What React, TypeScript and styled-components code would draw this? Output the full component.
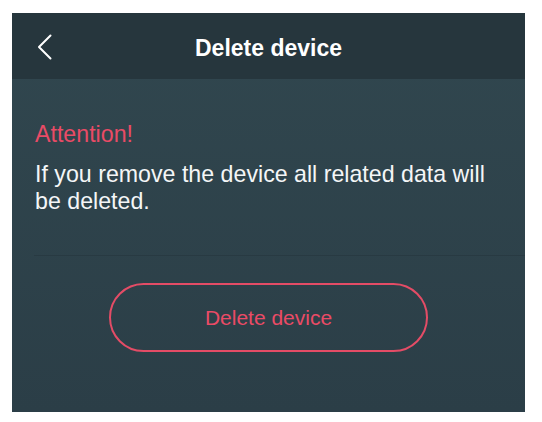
import React from "react";
import styled, { createGlobalStyle } from "styled-components";

const Global = createGlobalStyle`
  html, body { margin: 0; padding: 0; background: #ffffff; }
  body { font-family: "Liberation Sans", Arial, sans-serif; -webkit-font-smoothing: antialiased; }
`;

const Page = styled.div`
  padding: 13px 17px 10px 12px;
`;

const Panel = styled.div`
  width: 513px;
  height: 399px;
  display: flex;
  flex-direction: column;
  background: linear-gradient(180deg, #31474f 0%, #2b3e47 100%);
`;

const Header = styled.header`
  height: 66px;
  flex: none;
  display: grid;
  grid-template-columns: 60px 1fr 60px;
  align-items: center;
  background: #26363d;
  color: #ffffff;
`;

const BackButton = styled.button`
  border: 0;
  background: none;
  padding: 2px 0 0 25px;
  height: 66px;
  display: flex;
  align-items: center;
  cursor: pointer;
`;

const Title = styled.h1`
  margin: 0;
  padding-top: 4px;
  text-align: center;
  font-size: 23px;
  line-height: 27px;
  font-weight: 700;
`;

const Content = styled.section`
  padding: 42px 20px 0 23px;
`;

const Warning = styled.p`
  margin: 0;
  color: #ea4b66;
  font-size: 23.2px;
  line-height: 27px;
`;

const Message = styled.p`
  margin: 13px 0 0;
  color: #f4f6f7;
  font-size: 23.2px;
  line-height: 27px;
`;

const Divider = styled.hr`
  margin: 40px 0 0 22px;
  border: 0;
  height: 1px;
  background: #283a42;
`;

const Actions = styled.div`
  display: flex;
  justify-content: center;
  padding-top: 27px;
`;

const OutlineButton = styled.button`
  width: 319px;
  height: 69px;
  border: 2px solid #e44c66;
  border-radius: 35px;
  background: transparent;
  color: #ea4b66;
  font-family: "Liberation Sans", Arial, sans-serif;
  font-size: 21px;
  padding: 0;
  cursor: pointer;
`;

export default function App() {
  return (
    <>
      <Global />
      <Page>
        <Panel>
          <Header>
            <BackButton aria-label="Back">
              <svg width="16" height="26" viewBox="0 0 16 26" fill="none">
                <path d="M13.5 1.5 L2 13 L13.5 24.5" stroke="#ffffff" strokeWidth="2" strokeLinecap="round" strokeLinejoin="round" />
              </svg>
            </BackButton>
            <Title>Delete device</Title>
            <span />
          </Header>
          <Content>
            <Warning>Attention!</Warning>
            <Message>If you remove the device all related data will be deleted.</Message>
          </Content>
          <Divider />
          <Actions>
            <OutlineButton>Delete device</OutlineButton>
          </Actions>
        </Panel>
      </Page>
    </>
  );
}
